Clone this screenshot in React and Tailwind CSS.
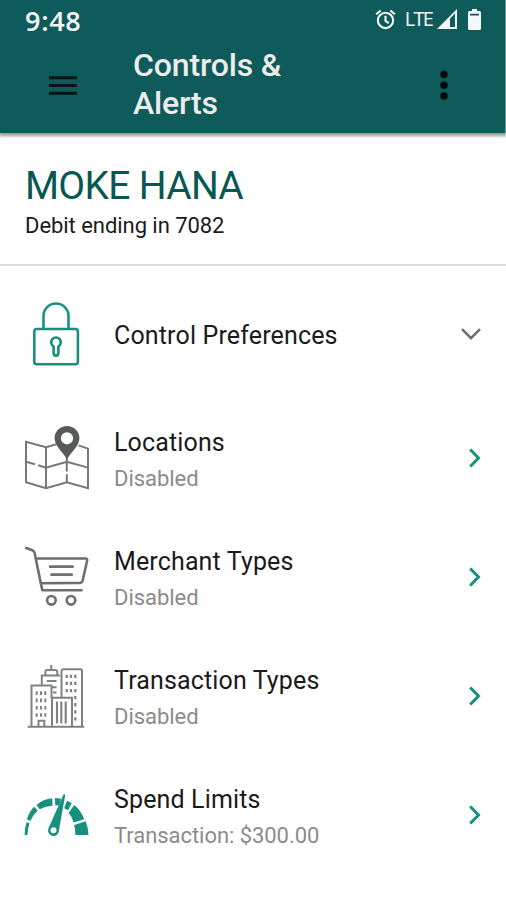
const LockIcon = () => (
    <svg viewBox="0 0 64 64" className="w-16 h-16 overflow-visible" fill="none" stroke="#16917f" strokeWidth="2.6" strokeLinejoin="round">
        <rect x="9.3" y="26" width="43.6" height="35.2" rx="2.5" />
        <path d="M18.5 26V13a12.5 12.5 0 0 1 25 0v13" />
        <path d="M28.6 43.4a4.8 4.8 0 1 1 4.8 0v6.8a2.4 2.4 0 0 1-4.8 0z" />
    </svg>
);

const MapIcon = () => (
    <svg viewBox="0 0 64 64" className="w-16 h-16 overflow-visible" fill="none" stroke="#77787a" strokeWidth="2">
        <path d="M31.5 18.3 21 21.3 1 15.8v40.5l20 6 20.8-6 21.2 6V22.6l-9.5-3.2M21 21.3v41" />
        <path d="m1 35.7 9 2.6M13.2 39.2l7.8 2.4 20.8-5.9L63 41.6M41.8 31v14.5M41.8 48.3v8" />
        <path d="M42 33.5C39.5 27.5 29.6 20.5 29.6 12.3a12.4 12.4 0 0 1 24.8 0c0 8.2-9.9 15.2-12.4 21.2zM42 6.2a6.1 6.1 0 1 0 0 12.2 6.1 6.1 0 0 0 0-12.2z" fill="#58595b" fillRule="evenodd" stroke="none" />
    </svg>
);

const CartIcon = () => (
    <svg viewBox="0 0 64 64" className="w-16 h-16 overflow-visible" fill="none" stroke="#6d6e71" strokeWidth="2.6" strokeLinecap="round" strokeLinejoin="round">
        <path d="m1.2 3 6.2 2.3q1.8.8 2.2 2.7l7.7 37.3h39.2" />
        <path d="M11.5 13.5h48.8q2.3 0 1.8 2.2l-4.5 20.1q-.5 2-2.5 2.1L16 38.3" />
        <path d="M25.2 21.7h22.4M26.5 29.7h20.2" strokeWidth="2.8" />
        <circle cx="26.4" cy="55.3" r="4.3" />
        <circle cx="46" cy="55.3" r="4.3" />
    </svg>
);

const BuildingsIcon = () => (
    <svg viewBox="0 0 64 64" className="w-16 h-16 overflow-visible" fill="none" stroke="#808183" strokeWidth="2">
        <path d="M2.7 62.7h56.6M6.5 62V21.4h20V34M16.8 21.4V11.5H35M20.4 11.5V8q0-2 2-2H30q2.3 0 2.3 2v3.5M26.3 6V1M36.5 33V7q0-1.7 1.7-1.7h17.1q1.7 0 1.7 1.7v55" />
        <path d="M27 62V33.8h20V62M13.5 62v-5.3h5.8V62" />
        <path d="M32 37.5v22M36.3 37.5v22M40.7 37.5v22" strokeWidth="2.1" />
        <path d="M21.7 17H31.5M27 23.2h4.5M28 28.4h3.5" />
        <path d="M11.7 27.3v28M16 27.3v28M20.3 27.3v28" strokeDasharray="3.6 3.7" />
        <path d="M41.7 10.7v18M46 10.7v18M50.3 10.7v46" strokeDasharray="3.3 3.8" strokeWidth="2.2" />
    </svg>
);

const GaugeIcon = () => (
    <svg viewBox="0 0 64 64" className="w-16 h-16 overflow-visible" fill="#16917f">
        <path d="M-.4 52h2.9q0-6 2-11.7l-2.9-1Q-.5 45-.4 52z" />
        <path d="M2 36.2 5.2 38q2.8-6 7.5-10.4L9 23.8q-4.9 5-7 12.4z" />
        <path d="m11.4 22 3.3 4.2q6-3.3 12.8-3.5l-.3-7.4q-8.7.7-15.8 6.7z" />
        <path d="m30 15.1 6.2.6-2.2 6.9-3.8-.3zM41.9 17.8l4.8 2.3-3.5 7.2-4-2z" />
        <path d="M49.3 22q6.9 5.6 9.9 14.2L48.6 39.6q-1.3-5.6-5-9.8zM49.2 42l11.5-3.7q2.6 6.7 2.8 13.7h-13.2q0-5.4-1.1-10z" />
        <path d="M38.5 11.6q1.5-.8 1.7.6L34 47a5.5 5.5 0 1 1-10.6-1.5zM28.5 44.2a3 3 0 1 0 0 6 3 3 0 0 0 0-6z" fillRule="evenodd" />
    </svg>
);

const controls = [
    { icon: MapIcon, label: 'Locations', detail: 'Disabled' },
    { icon: CartIcon, label: 'Merchant Types', detail: 'Disabled' },
    { icon: BuildingsIcon, label: 'Transaction Types', detail: 'Disabled' },
    { icon: GaugeIcon, label: 'Spend Limits', detail: 'Transaction: $300.00' },
];

const StatusBar = () => (
    <div className="h-10 flex items-center justify-between pl-[25px] pr-6 text-[#f4f8f8]">
        <span className="font-['Open_Sans',sans-serif] text-[27px] font-semibold leading-10 tracking-[0.7px] pt-0.5">9:48</span>
        <div className="flex items-center pb-0.5">
            {/* Alarm */}
            <svg viewBox="0 0 22 22" className="w-[21px] h-[21px] mr-[9px]" fill="none" stroke="currentColor" strokeWidth="2.2">
                <circle cx="11" cy="12" r="8" />
                <path d="M11 7v5.5l3.5 2.3M1.2 5.5 6 1.5M20.8 5.5 16 1.5" />
            </svg>
            <span className="font-['Open_Sans',sans-serif] text-[20px] font-medium leading-5 tracking-[-1.8px] mr-[5px]">LTE</span>
            <svg viewBox="0 0 20 20" className="w-5 h-5 mr-[11px]">
                <path d="M0 20 20 0v20zM13 9.5V18h5V4.5z" fill="currentColor" fillRule="evenodd" />
            </svg>
            <svg viewBox="0 0 13 21" className="w-[13px] h-[21px]" fill="currentColor">
                <path d="M4 0h5v2h2.5Q13 2 13 3.5V19.5Q13 21 11.5 21h-10Q0 21 0 19.5v-16Q0 2 1.5 2H4zM2 4.7v1.7h9V4.7z" fillRule="evenodd" />
            </svg>
        </div>
    </div>
);

export default function App() {
    return (
        <div className="w-[506px] h-[900px] bg-white overflow-hidden font-[Roboto,sans-serif] text-[#1a1a1a]">
            <header className="h-[133px] bg-[#0f5b5b] border-r border-[#6f9c9c] shadow-[0_2px_3px_1px_rgba(0,0,0,0.4)]">
                <StatusBar />
                <div className="flex items-start">
                    <svg viewBox="0 0 28 20" className="w-7 h-5 mt-9 ml-[49px]" stroke="#061616" strokeWidth="3">
                        <path d="M0 1.7h28M0 9.5h28M0 17.3h28" />
                    </svg>
                    <h1 className="w-[220px] ml-14 mt-1.5 text-[32px] leading-[38px] font-medium tracking-[-0.15px] text-[#ececea]">
                        Controls &amp;<br />Alerts
                    </h1>
                    <svg viewBox="0 0 8 30" className="w-2 h-[30px] mt-[30px] ml-[87px]" fill="#030808">
                        <circle cx="4" cy="4.5" r="3.7" />
                        <circle cx="4" cy="15.2" r="3.7" />
                        <circle cx="4" cy="25.9" r="3.7" />
                    </svg>
                </div>
            </header>

            <section className="h-[133px] border-b-2 border-[#dcdcdc] pl-[25px] pt-[30px]">
                <h2 className="text-[39px] leading-[46px] tracking-[-0.7px] text-[#075752]">MOKE HANA</h2>
                <p className="pt-px text-[22px] leading-8 tracking-[-0.05px]">Debit ending in 7082</p>
            </section>

            <main>
                <div className="h-[132px] pt-[5px] flex items-center pl-[25px] pr-[25px]">
                    <LockIcon />
                    <span className="flex-1 ml-[25px] pt-0.5 text-[25px] tracking-[0.15px]">Control Preferences</span>
                    <svg viewBox="0 0 20 12" className="w-5 h-3 mb-0.5" fill="none" stroke="#6b6b6b" strokeWidth="2.4">
                        <path d="m1 1.2 9 9 9-9" />
                    </svg>
                </div>
                {controls.map(({ icon: Icon, label, detail }) => (
                    <div key={label} className="h-[119px] flex items-center pl-[25px] pr-[25px]">
                        <Icon />
                        <div className="flex-1 ml-[25px] pt-[7px]">
                            <div className="text-[25px] leading-9 tracking-[0.14px]">{label}</div>
                            <div className="text-[22px] leading-9 tracking-[-0.05px] text-[#8b8b8b]">{detail}</div>
                        </div>
                        <svg viewBox="0 0 12 20" className="w-3 h-5" fill="none" stroke="#16917f" strokeWidth="3">
                            <path d="m1.2 1.5 8.3 8.5-8.3 8.5" />
                        </svg>
                    </div>
                ))}
            </main>
        </div>
    );
}
